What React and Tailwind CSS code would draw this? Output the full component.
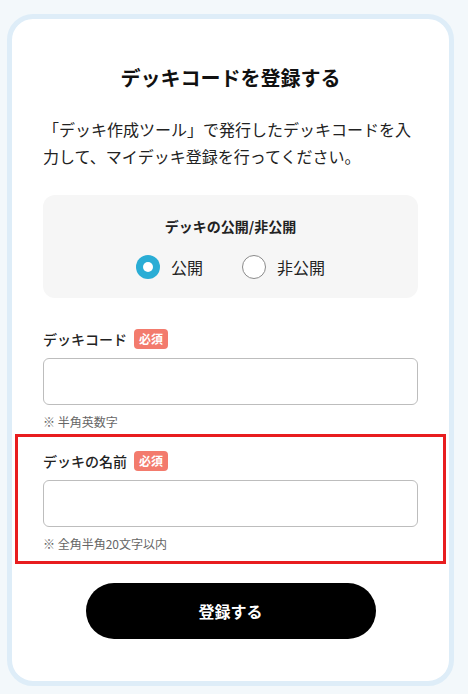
import { useState } from 'react';

const FONT = { fontFamily: '"Noto Sans CJK JP", "Noto Sans", sans-serif' };

function Badge() {
  return (
    <span className="inline-flex items-center justify-center w-[34px] h-[20px] rounded-[4px] bg-[#f37b6d] text-white text-[12px] font-bold leading-none">
      必須
    </span>
  );
}

function Radio({ checked, label, onClick }) {
  return (
    <button type="button" onClick={onClick} className="flex items-center gap-[11px]">
      {checked ? (
        <span className="w-[24px] h-[24px] rounded-full bg-[#2aadd5] flex items-center justify-center">
          <span className="w-[10px] h-[10px] rounded-full bg-white" />
        </span>
      ) : (
        <span className="w-[24px] h-[24px] rounded-full bg-white border border-[#8a8a8a]" />
      )}
      <span className="text-[16px] leading-[24px] text-[#222]">{label}</span>
    </button>
  );
}

function Field({ label, note }) {
  return (
    <div>
      <div className="flex items-center gap-[7px] h-[24px]">
        <span className="text-[14px] font-medium text-[#222]">{label}</span>
        <Badge />
      </div>
      <input className="mt-[7px] block w-full h-[47px] rounded-[6px] border border-[#bdbdbd] bg-white px-3 outline-none" />
      <p className="mt-[8px] text-[12px] leading-[18px] text-[#666]">{note}</p>
    </div>
  );
}

export default function App() {
  const [isPublic, setIsPublic] = useState(true);

  return (
    <div className="min-h-[694px] bg-[#f3f8fb] pt-[14px] pl-[7px] pr-[14px] pb-[10px]" style={FONT}>
      <div className="w-[447px] rounded-[26px] border-[5px] border-[#deedf8] bg-white px-[31px] pt-[45px] pb-[42px]">
        <h1 className="text-center text-[20px] leading-[28px] font-bold text-[#111]">デッキコードを登録する</h1>
        <p className="mt-[24px] text-[16px] leading-[27px] text-[#222]">
          「デッキ作成ツール」で発行したデッキコードを入力して、マイデッキ登録を行ってください。
        </p>

        {/* public / private */}
        <div className="mt-[25px] rounded-[12px] bg-[#f6f6f6] pt-[21px] pb-[19px]">
          <p className="text-center text-[14px] leading-[20px] font-bold text-[#222]">デッキの公開/非公開</p>
          <div className="mt-[19px] flex justify-center gap-[39px]">
            <Radio checked={isPublic} label="公開" onClick={() => setIsPublic(true)} />
            <Radio checked={!isPublic} label="非公開" onClick={() => setIsPublic(false)} />
          </div>
        </div>

        <div className="mt-[29px]">
          <Field label="デッキコード" note="※ 半角英数字" />
        </div>

        <div className="mt-[3px] -mx-[28px] border-[3px] border-[#e81d1f] px-[25px] pt-[12px] pb-[8px]">
          <Field label="デッキの名前" note="※ 全角半角20文字以内" />
        </div>

        <div className="mt-[19px] flex justify-center">
          <button className="w-[290px] h-[56px] rounded-full bg-black text-white text-[16px] font-bold">
            登録する
          </button>
        </div>
      </div>
    </div>
  );
}
